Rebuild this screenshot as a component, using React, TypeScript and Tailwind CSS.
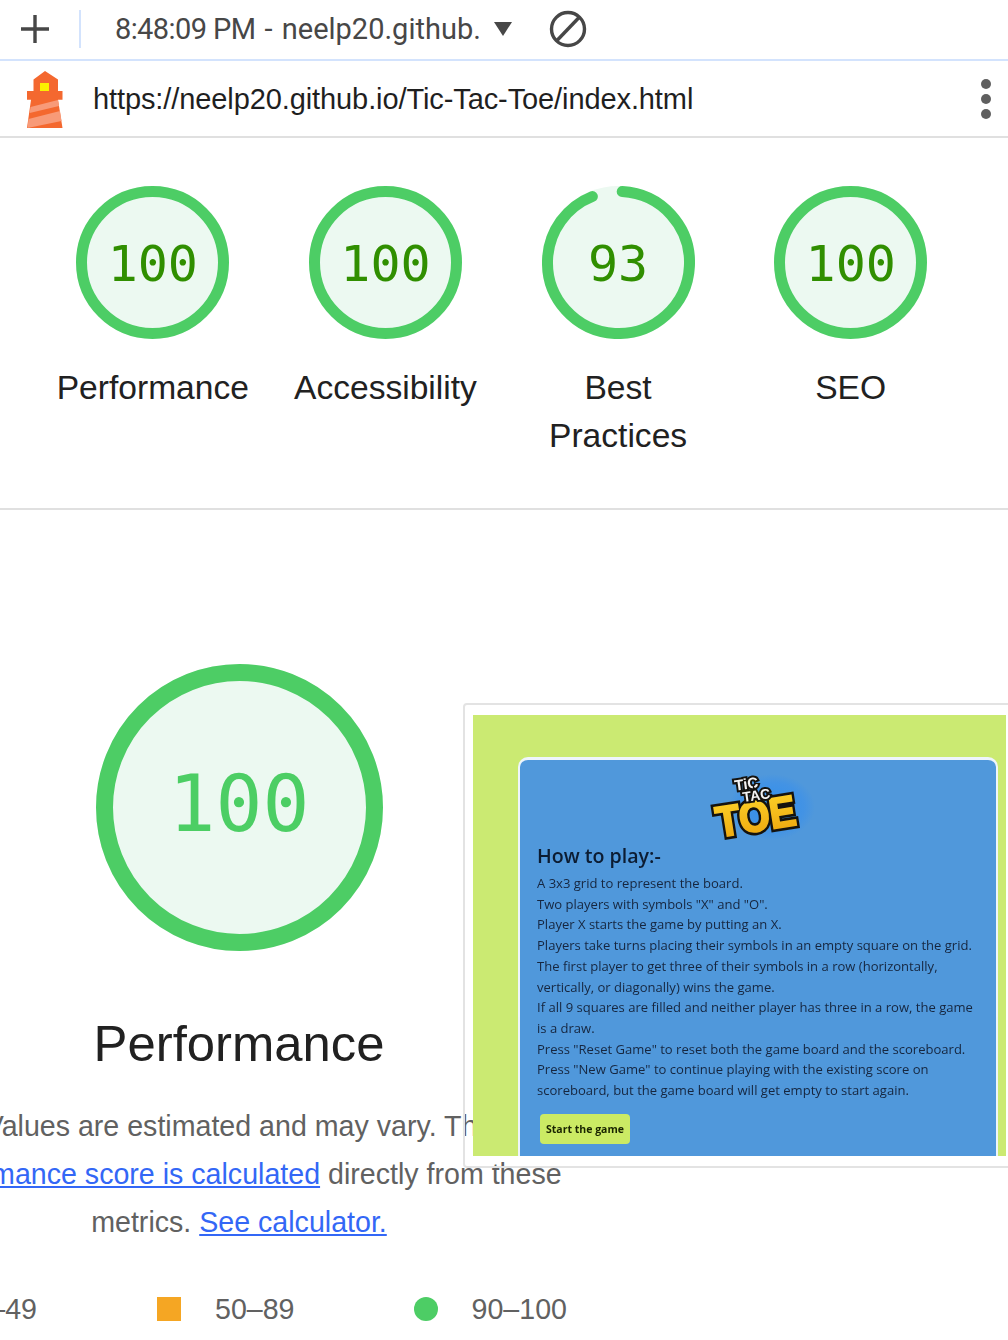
const SANS = "font-['Liberation_Sans',Arial,sans-serif]";

function Gauge({ score, size, stroke, big }: { score: number; size: number; stroke: number; big?: boolean }) {
    const r = (size - stroke) / 2;
    const c = 2 * Math.PI * r;
    const full = score === 100;
    return (
        <div className="relative flex items-center justify-center" style={{ width: size, height: size }}>
            <svg width={size} height={size} className="absolute inset-0">
                <circle cx={size / 2} cy={size / 2} r={size / 2} fill="#ecf9f1" />
                <circle
                    cx={size / 2}
                    cy={size / 2}
                    r={r}
                    fill="none"
                    stroke="#4dcd65"
                    strokeWidth={stroke}
                    strokeLinecap={full ? "butt" : "round"}
                    strokeDasharray={full ? undefined : `${c * 0.93} ${c}`}
                    transform={full ? undefined : `rotate(-87 ${size / 2} ${size / 2})`}
                />
            </svg>
            <span
                className={
                    big
                        ? "relative mt-[-8px] font-['DejaVu_Sans_Mono',monospace] text-[78px] leading-none text-[#4cce64]"
                        : "relative mt-[3px] font-['DejaVu_Sans_Mono',monospace] text-[50px] leading-none text-[#308f00]"
                }
            >
                {score}
            </span>
        </div>
    );
}

function ScoreCol({ score, label }: { score: number; label: string }) {
    return (
        <div className="flex flex-col items-center">
            <Gauge score={score} size={153} stroke={11} />
            <div className="mt-[25px] w-[200px] text-center text-[33.6px] leading-[48px] text-[#212121] whitespace-pre-line">
                {label}
            </div>
        </div>
    );
}

function LighthouseLogo() {
    return (
        <svg width="40" height="60" viewBox="26 69 40 60">
            <path d="M45 71 L58 79.5 V91 H62.5 V99.7 H58 L62.5 128 H27 L31 99.7 H27 V91 H33.5 V79.5 Z" fill="#f4682f" />
            <rect x="40" y="83" width="9" height="8" fill="#fcf000" />
            <path d="M30.5 107 L58 100 L59 106 L29.7 113 Z" fill="#f89a78" />
            <path d="M28.5 119 L60 111 L61.5 121 L27.5 128 Z" fill="#f89a78" />
        </svg>
    );
}

function TicTacToeLogo() {
    return (
        <svg width="112" height="76" viewBox="0 0 112 76" className="block">
            <defs>
                <radialGradient id="logoGlow">
                    <stop offset="0%" stopColor="#2f8fee" />
                    <stop offset="75%" stopColor="#4393e4" />
                    <stop offset="100%" stopColor="#5098db" />
                </radialGradient>
                <linearGradient id="logoGold" x1="0" y1="0" x2="0" y2="1">
                    <stop offset="0%" stopColor="#fdd32a" />
                    <stop offset="100%" stopColor="#eda50d" />
                </linearGradient>
            </defs>
            <ellipse cx="63" cy="35" rx="43" ry="33" fill="url(#logoGlow)" />
            <g fontFamily="'Liberation Sans', sans-serif" fontWeight="700" textAnchor="middle">
                <text x="49" y="59" fontSize="43" fill="#15130f" stroke="#15130f" strokeWidth="7.5" transform="rotate(-9 49 59)" textLength="80" lengthAdjust="spacingAndGlyphs">
                    TOE
                </text>
                <text x="49" y="59" fontSize="43" fill="url(#logoGold)" stroke="url(#logoGold)" strokeWidth="2.2" transform="rotate(-9 49 59)" textLength="80" lengthAdjust="spacingAndGlyphs">
                    TOE
                </text>
                <text x="38" y="17" fontSize="15" fill="#f4f4f4" stroke="#15130f" strokeWidth="4" transform="rotate(-8 38 17)" style={{ paintOrder: "stroke" }}>
                    TiC
                </text>
                <text x="48" y="28" fontSize="14" fill="#f4f4f4" stroke="#15130f" strokeWidth="4" transform="rotate(-8 48 28)" style={{ paintOrder: "stroke" }}>
                    TAC
                </text>
            </g>
        </svg>
    );
}

const rules = [
    "A 3x3 grid to represent the board.",
    'Two players with symbols "X" and "O".',
    "Player X starts the game by putting an X.",
    "Players take turns placing their symbols in an empty square on the grid.",
    "The first player to get three of their symbols in a row (horizontally,",
    "vertically, or diagonally) wins the game.",
    "If all 9 squares are filled and neither player has three in a row, the game",
    "is a draw.",
    'Press "Reset Game" to reset both the game board and the scoreboard.',
    'Press "New Game" to continue playing with the existing score on',
    "scoreboard, but the game board will get empty to start again.",
];

function Thumbnail() {
    return (
        <div className="absolute left-[463px] top-[703px] h-[465px] w-[560px] rounded-[4px] border-2 border-[#e3e3e3] pl-[8px] pt-[10px]">
            <div className="h-[441px] w-[533px] overflow-hidden bg-[#cbea72] pl-[45px] pt-[42px]">
                <div className="h-[420px] w-[480px] rounded-t-[10px] border-x-[2px] border-t-[3px] border-white/90 bg-[#5098db] pl-[17px] font-['Open_Sans',sans-serif] text-[#16263f] blur-[0.45px]">
                    <div className="flex justify-center pr-[4px] pt-[12px]">
                        <TicTacToeLogo />
                    </div>
                    <div className="mt-[-6px] text-[19.6px] font-semibold leading-[28px] text-[#0c1c32]">How to play:-</div>
                    <div className="mt-[3px] text-[13.05px] leading-[20.72px] whitespace-nowrap">
                        {rules.map((r) => (
                            <div key={r}>{r}</div>
                        ))}
                    </div>
                    <div className="ml-[3px] mt-[13px] flex h-[30px] w-[90px] items-center justify-center rounded-[4px] bg-[#cbea64] pt-[2px] text-[10.5px] font-bold text-[#1a2400]">
                        Start the game
                    </div>
                </div>
            </div>
        </div>
    );
}

export default function App() {
    return (
        <div className={`relative h-[1340px] w-[1008px] overflow-hidden bg-white ${SANS}`}>
            {/* devtools tab strip */}
            <div className="flex h-[61px] items-center border-b-2 border-[#d3e3fd] pb-[2px]">
                <svg width="32" height="32" viewBox="0 0 32 32" className="ml-[19px]">
                    <path d="M16 2 V30 M2 16 H30" stroke="#474747" strokeWidth="3.4" fill="none" />
                </svg>
                <div className="ml-[28px] h-[38px] w-[2px] bg-[#d3e3fd]" />
                <span className="ml-[34px] mt-[3px] w-[366px] font-['Roboto',sans-serif] text-[29px] text-[#474747] whitespace-nowrap [word-spacing:2px]">
                    <span className="tracking-[-0.6px] [word-spacing:0px]">8:48:09 PM</span> - neelp20.github.
                </span>
                <svg width="18" height="14" viewBox="0 0 18 14" className="ml-[13px]">
                    <path d="M0 0 H18 L9 14 Z" fill="#474747" />
                </svg>
                <svg width="38" height="38" viewBox="0 0 38 38" className="ml-[37px]">
                    <circle cx="19" cy="19" r="16.5" fill="none" stroke="#474747" strokeWidth="3.4" />
                    <path d="M7.5 31 L30.5 7" stroke="#474747" strokeWidth="3.4" />
                </svg>
            </div>

            {/* url bar */}
            <div className="flex h-[77px] items-center border-b-2 border-[#e0e0e0]">
                <div className="ml-[26px]">
                    <LighthouseLogo />
                </div>
                <span className="ml-[27px] mt-[2px] text-[29px] tracking-[-0.1px] text-[#1f1f1f] whitespace-nowrap">https://neelp20.github.io/Tic-Tac-Toe/index.html</span>
                <div className="ml-auto mr-[17px] flex flex-col gap-[5px]">
                    <div className="h-[10px] w-[10px] rounded-full bg-[#5f5f5f]" />
                    <div className="h-[10px] w-[10px] rounded-full bg-[#5f5f5f]" />
                    <div className="h-[10px] w-[10px] rounded-full bg-[#5f5f5f]" />
                </div>
            </div>

            {/* score summary */}
            <div className="grid h-[372px] grid-cols-4 border-b-2 border-[#e0e0e0] pl-[36.5px] pr-[41px] pt-[48px]">
                <ScoreCol score={100} label="Performance" />
                <ScoreCol score={100} label="Accessibility" />
                <ScoreCol score={93} label={"Best\nPractices"} />
                <ScoreCol score={100} label="SEO" />
            </div>

            {/* performance section */}
            <div className="ml-[-91px] flex w-[660px] flex-col items-center pt-[154px]">
                <Gauge score={100} size={287} stroke={17} big />
                <div className="mt-[63px] text-[50.8px] leading-[60px] text-[#212121]">Performance</div>
                <div className="mt-[28px] text-center text-[28.6px] leading-[48px] text-[#616161] whitespace-nowrap">
                    Values are estimated and may vary. The
                    <br />
                    <span className="text-[#3367f6] underline">performance score is calculated</span> directly from these
                    <br />
                    metrics. <span className="text-[#3367f6] underline">See calculator.</span>
                </div>
            </div>

            {/* legend */}
            <div className="ml-[-28px] mt-[39px] flex h-[48px] items-center text-[28.6px] text-[#616161]">
                <span className="w-[65px] text-right">0–49</span>
                <div className="ml-[120px] h-[24px] w-[24px] bg-[#f5a623]" />
                <span className="ml-[34px]">50–89</span>
                <div className="ml-[119px] h-[24px] w-[24px] rounded-full bg-[#4dcd65]" />
                <span className="ml-[34px]">90–100</span>
            </div>

            <Thumbnail />
        </div>
    );
}
